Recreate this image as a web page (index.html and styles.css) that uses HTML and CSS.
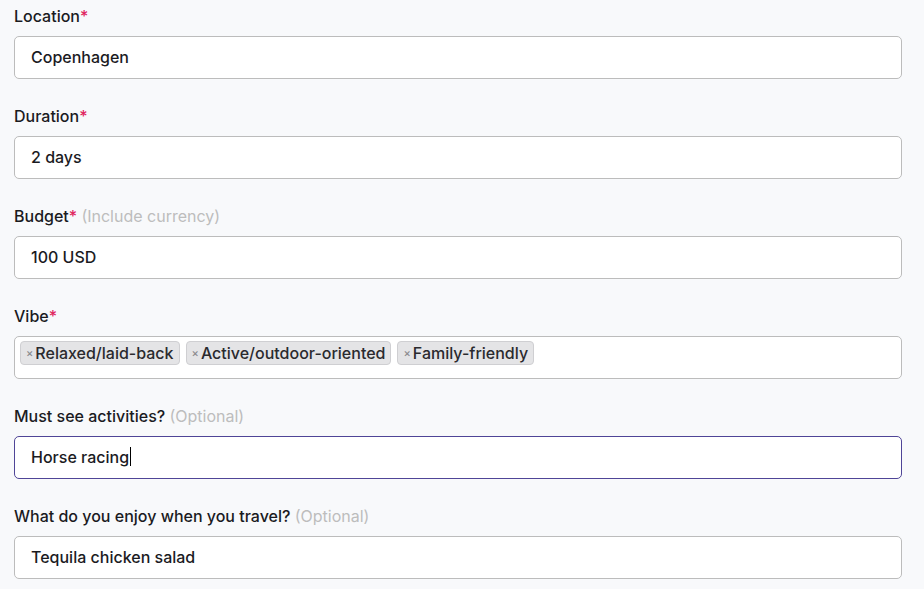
FILE: index.html
```html
<!DOCTYPE html>
<html lang="en">
<head>
<meta charset="utf-8">
<link rel="stylesheet" href="styles.css">
</head>
<body>
<form class="form">
  <div class="field">
    <div class="label">Location<span class="req">*</span></div>
    <div class="input">Copenhagen</div>
  </div>
  <div class="field">
    <div class="label">Duration<span class="req">*</span></div>
    <div class="input">2 days</div>
  </div>
  <div class="field">
    <div class="label">Budget<span class="req">*</span> <span class="hint">(Include currency)</span></div>
    <div class="input">100 USD</div>
  </div>
  <div class="field">
    <div class="label">Vibe<span class="req">*</span></div>
    <div class="input tags">
      <span class="chip"><span class="x">×</span>Relaxed/laid-back</span>
      <span class="chip"><span class="x">×</span>Active/outdoor-oriented</span>
      <span class="chip"><span class="x">×</span>Family-friendly</span>
    </div>
  </div>
  <div class="field">
    <div class="label">Must see activities? <span class="hint">(Optional)</span></div>
    <div class="input focused">Horse racing<span class="caret"></span></div>
  </div>
  <div class="field">
    <div class="label">What do you enjoy when you travel? <span class="hint">(Optional)</span></div>
    <div class="input">Tequila chicken salad</div>
  </div>
</form>
</body>
</html>
```
FILE: styles.css
```css
html, body {
  margin: 0;
  padding: 0;
  background: #f8f9fb;
  overflow: hidden;
}
body {
  font-family: Inter, "Noto Sans", sans-serif;
  font-size: 16px;
  color: #1b1b1f;
}
.form {
  padding: 6px 22px 0 14px;
  display: flex;
  flex-direction: column;
}
.field {
  display: flex;
  flex-direction: column;
  height: 100px;
}
.label {
  line-height: 20px;
  height: 20px;
  margin-bottom: 10px;
  font-weight: 500;
}
.req {
  color: #e0245e;
}
.hint {
  color: #bdbdbd;
  font-weight: 400;
}
.input {
  box-sizing: border-box;
  height: 43px;
  background: #fff;
  border: 1px solid #bcbcbc;
  border-radius: 5px;
  padding: 0 16px 2px;
  display: flex;
  align-items: center;
  font-weight: 500;
}
.input.focused {
  border-color: #4f4597;
}
.caret {
  display: inline-block;
  width: 1px;
  height: 19px;
  background: #000;
  margin-left: 1px;
}
.input.tags {
  align-items: flex-start;
  padding: 4px 5px;
  gap: 6px;
}
.chip {
  box-sizing: border-box;
  height: 24px;
  display: inline-flex;
  align-items: center;
  background: #e4e4e6;
  border: 1px solid #cfcfd2;
  border-radius: 4px;
  padding: 0 5px 1px 5px;
  color: #2a2a2e;
}
.x {
  font-size: 11px;
  color: #8a8a8e;
  margin-right: 2px;
}
```
